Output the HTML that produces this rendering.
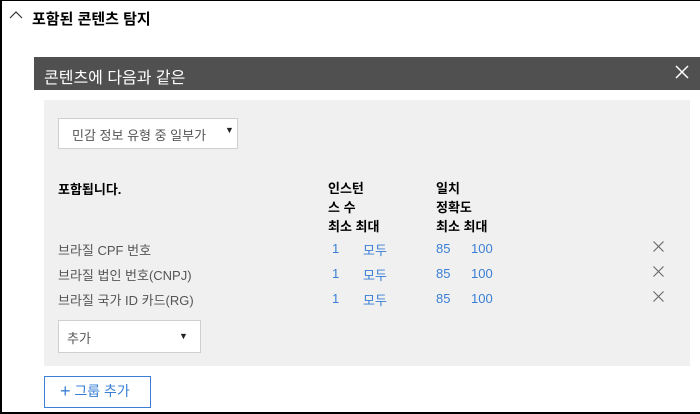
<!DOCTYPE html>
<html><head><meta charset="utf-8"><style>
html,body{margin:0;padding:0}
body{width:700px;height:414px;position:relative;overflow:hidden;background:#fff;font-family:"Segoe UI","Liberation Sans","Noto Sans CJK KR",sans-serif;}
.frame{position:absolute;left:0;top:0;width:698px;height:411px;border-left:2px solid #000;border-top:1px solid #000;border-bottom:2px solid #000;}
.a{position:absolute;white-space:nowrap}
.bar{position:absolute;left:34px;top:57px;width:666px;height:33px;background:#505050;}
.panel{position:absolute;left:44px;top:100px;width:646px;height:266px;background:#f0f0f0;}
.dd{position:absolute;background:#fff;border:1px solid #cfcfcf;}
.b{color:#000;font-size:13px;font-weight:bold}
.g{color:#555;font-size:13px}
.bl{color:#3a7fd5;font-size:13px}
</style></head><body>
<div class="frame"></div>
<svg class="a" style="left:9px;top:10px" width="14" height="10"><path d="M1 8 L7 2 L13 8" stroke="#333" stroke-width="1.2" fill="none"/></svg>
<div class="a" style="left:32px;top:8px;font-size:15px;font-weight:bold;color:#000">포함된 콘텐츠 탐지</div>
<div class="bar"></div>
<div class="a" style="left:44px;top:64px;font-size:16px;color:#fff">콘텐츠에 다음과 같은</div>
<svg class="a" style="left:675px;top:65px" width="14" height="14"><path d="M1 1L13 13M13 1L1 13" stroke="#fff" stroke-width="1.5"/></svg>
<div class="panel"></div>
<div class="dd" style="left:58px;top:118px;width:178px;height:29px"></div>
<div class="a g" style="left:72px;top:125px">민감 정보 유형 중 일부가</div>
<div class="a" style="left:225px;top:125px;font-size:9px;color:#222">▼</div>
<div class="a b" style="left:58px;top:179px">포함됩니다.</div>
<div class="a b" style="left:328px;top:179px;line-height:19px">인스턴<br>스 수<br>최소 최대</div>
<div class="a b" style="left:436px;top:179px;line-height:19px">일치<br>정확도<br>최소 최대</div>
<div class="a g" style="left:58px;top:240px">브라질 CPF 번호</div>
<div class="a g" style="left:58px;top:265px">브라질 법인 번호(CNPJ)</div>
<div class="a g" style="left:58px;top:290px">브라질 국가 ID 카드(RG)</div>
<div class="a bl" style="left:332px;top:241px">1</div><div class="a bl" style="left:363px;top:240px">모두</div><div class="a bl" style="left:436px;top:241px">85</div><div class="a bl" style="left:471px;top:241px">100</div>
<div class="a bl" style="left:332px;top:266px">1</div><div class="a bl" style="left:363px;top:265px">모두</div><div class="a bl" style="left:436px;top:266px">85</div><div class="a bl" style="left:471px;top:266px">100</div>
<div class="a bl" style="left:332px;top:291px">1</div><div class="a bl" style="left:363px;top:290px">모두</div><div class="a bl" style="left:436px;top:291px">85</div><div class="a bl" style="left:471px;top:291px">100</div>
<svg class="a" style="left:653px;top:241px" width="11" height="11"><path d="M0.5 0.5L10.5 10.5M10.5 0.5L0.5 10.5" stroke="#666" stroke-width="1.1"/></svg>
<svg class="a" style="left:653px;top:266px" width="11" height="11"><path d="M0.5 0.5L10.5 10.5M10.5 0.5L0.5 10.5" stroke="#666" stroke-width="1.1"/></svg>
<svg class="a" style="left:653px;top:291px" width="11" height="11"><path d="M0.5 0.5L10.5 10.5M10.5 0.5L0.5 10.5" stroke="#666" stroke-width="1.1"/></svg>
<div class="dd" style="left:58px;top:320px;width:141px;height:31px"></div>
<div class="a g" style="left:67px;top:328px">추가</div>
<div class="a" style="left:179px;top:331px;font-size:9px;color:#222">▼</div>
<div class="a" style="left:44px;top:376px;width:105px;height:30px;border:1px solid #3a7fd5;background:#fff"></div>
<div class="a" style="left:60px;top:381px;font-size:14px;color:#3a7fd5"><span style="font-size:18px;font-weight:300;vertical-align:-1px">+</span> 그룹 추가</div>
</body></html>
